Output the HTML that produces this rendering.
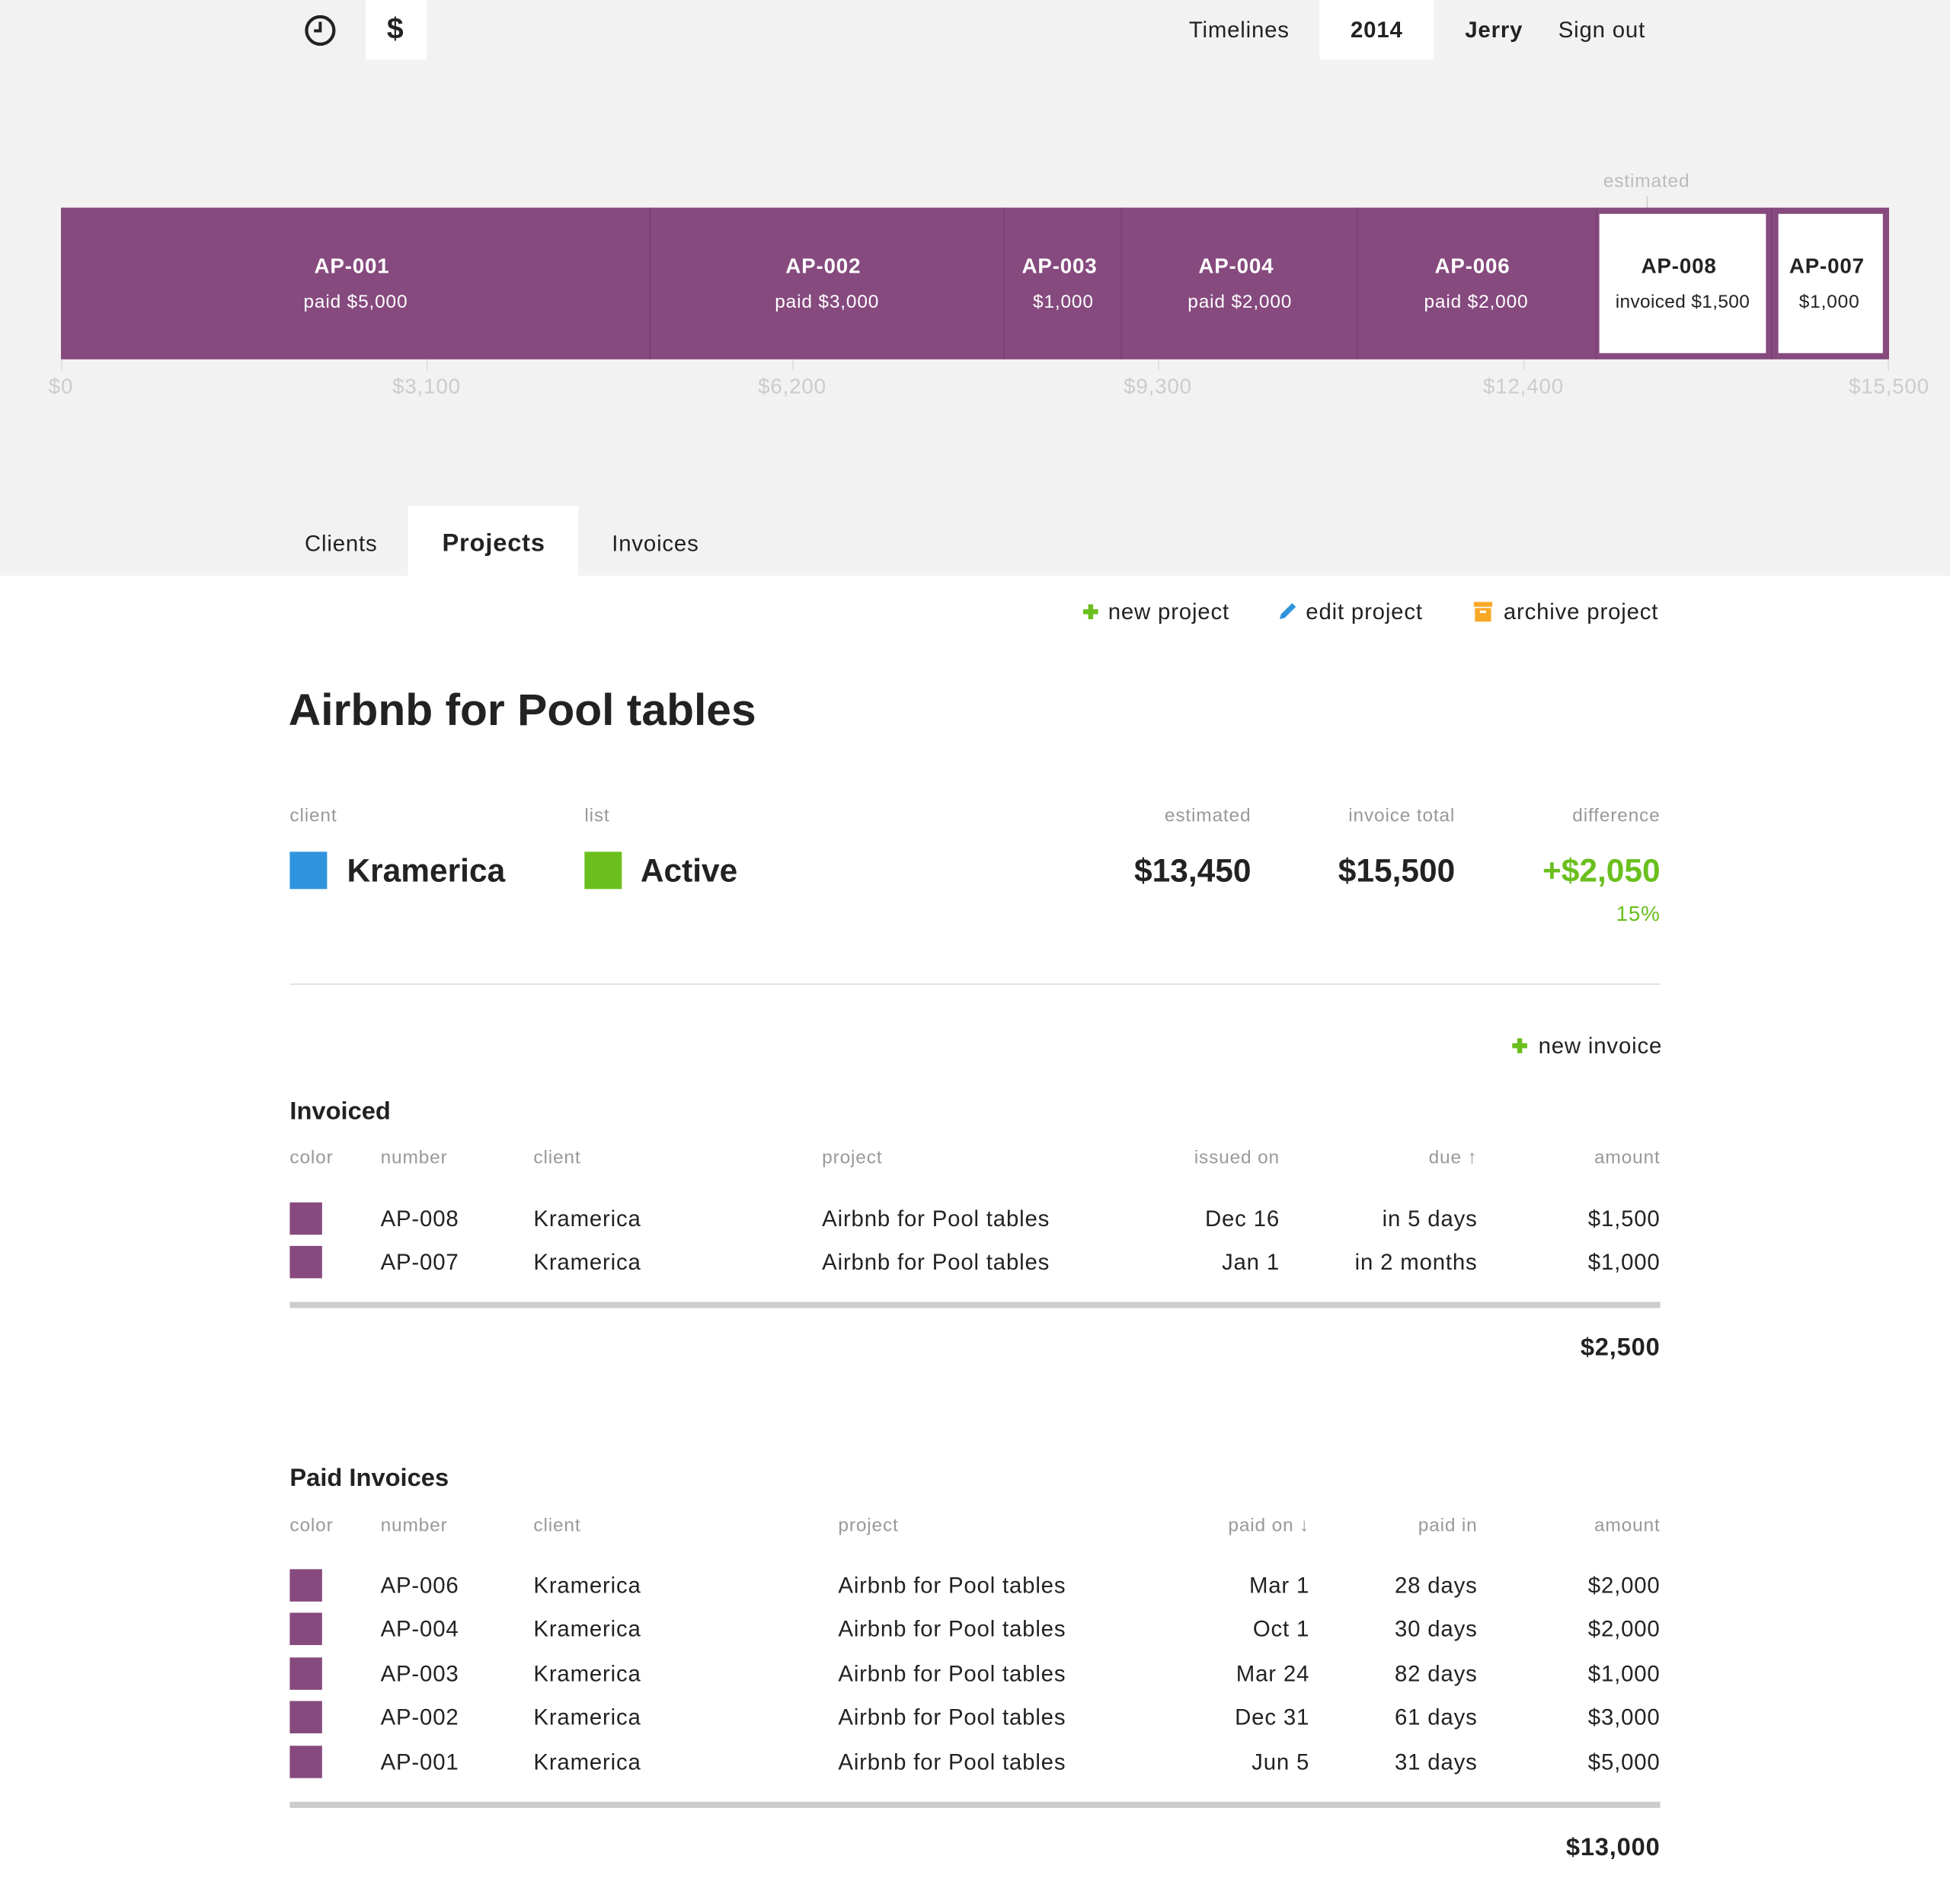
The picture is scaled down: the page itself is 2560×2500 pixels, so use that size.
<!DOCTYPE html>
<html><head><meta charset="utf-8">
<style>
html,body{margin:0;padding:0;width:2560px;height:2499px;overflow:hidden;background:#fff}
#s{position:absolute;left:0;top:0;width:1568px;height:1531px;transform:scale(1.63265);transform-origin:0 0;font-family:"Liberation Sans",sans-serif;color:#222;letter-spacing:0.5px}
.a{position:absolute}
.t{position:absolute;transform:translateY(-50%);line-height:1;white-space:nowrap}
.r{text-align:right}
.g{color:#999}
.b{font-weight:bold}
.c{transform:translate(-50%,-50%);text-align:center}
.sq{position:absolute;width:26px;height:26px;background:#864a7e}
</style></head><body><div id="s">
<div class="a" style="left:0;top:0;width:1568px;height:463px;background:#f2f2f2"></div>
<svg class="a" style="left:244px;top:11px" width="27" height="27" viewBox="0 0 27 27"><circle cx="13.5" cy="13.5" r="11" fill="none" stroke="#222" stroke-width="2.6"/><path d="M13.5 6.5V13.8H8.5" fill="none" stroke="#222" stroke-width="2.4"/></svg>
<div class="a" style="left:294px;top:0;width:49px;height:48px;background:#fff"></div>
<div class="t b c" style="left:318px;top:24px;font-size:24px">$</div>
<div class="t" style="left:956px;top:24px;font-size:18px">Timelines</div>
<div class="a" style="left:1061px;top:0;width:92px;height:48px;background:#fff"></div>
<div class="t b c" style="left:1107px;top:24px;font-size:18px">2014</div>
<div class="t b" style="left:1178px;top:24px;font-size:18px">Jerry</div>
<div class="t" style="left:1253px;top:24px;font-size:18px">Sign out</div>
<div class="t c" style="left:1324px;top:146px;font-size:15px;color:#bbb">estimated</div>
<div class="a" style="left:1324px;top:158px;width:1px;height:9px;background:#ccc"></div>
<div class="a" style="left:49px;top:167px;width:1470px;height:122px;background:#864a7e"></div>
<div class="a" style="left:522px;top:167px;width:1px;height:122px;background:#7a4073"></div>
<div class="a" style="left:807px;top:167px;width:1px;height:122px;background:#7a4073"></div>
<div class="a" style="left:901px;top:167px;width:1px;height:122px;background:#7a4073"></div>
<div class="a" style="left:1091px;top:167px;width:1px;height:122px;background:#7a4073"></div>
<div class="a" style="left:1283px;top:167px;width:1px;height:122px;background:#7a4073"></div>
<div class="a" style="left:1424px;top:167px;width:1px;height:122px;background:#7a4073"></div>
<div class="a" style="left:1286px;top:172px;width:134px;height:112px;background:#fff"></div>
<div class="a" style="left:1430px;top:172px;width:84px;height:112px;background:#fff"></div>
<div style="color:#fff">
<div class="t b c" style="left:283px;top:214px;font-size:17px">AP-001</div><div class="t c" style="left:286px;top:243px;font-size:15px">paid $5,000</div>
<div class="t b c" style="left:662px;top:214px;font-size:17px">AP-002</div><div class="t c" style="left:665px;top:243px;font-size:15px">paid $3,000</div>
<div class="t b c" style="left:852px;top:214px;font-size:17px">AP-003</div><div class="t c" style="left:855px;top:243px;font-size:15px">$1,000</div>
<div class="t b c" style="left:994px;top:214px;font-size:17px">AP-004</div><div class="t c" style="left:997px;top:243px;font-size:15px">paid $2,000</div>
<div class="t b c" style="left:1184px;top:214px;font-size:17px">AP-006</div><div class="t c" style="left:1187px;top:243px;font-size:15px">paid $2,000</div>
</div>
<div class="t b c" style="left:1350px;top:214px;font-size:17px">AP-008</div><div class="t c" style="left:1353px;top:243px;font-size:15px;letter-spacing:0.2px">invoiced $1,500</div>
<div class="t b c" style="left:1469px;top:214px;font-size:17px">AP-007</div><div class="t c" style="left:1471px;top:243px;font-size:15px">$1,000</div>
<div style="color:#ccc;font-size:17px">
<div class="a" style="left:49px;top:289px;width:1px;height:9px;background:#ddd"></div><div class="t c" style="left:49px;top:311px">$0</div>
<div class="a" style="left:343px;top:289px;width:1px;height:9px;background:#ddd"></div><div class="t c" style="left:343px;top:311px">$3,100</div>
<div class="a" style="left:637px;top:289px;width:1px;height:9px;background:#ddd"></div><div class="t c" style="left:637px;top:311px">$6,200</div>
<div class="a" style="left:931px;top:289px;width:1px;height:9px;background:#ddd"></div><div class="t c" style="left:931px;top:311px">$9,300</div>
<div class="a" style="left:1225px;top:289px;width:1px;height:9px;background:#ddd"></div><div class="t c" style="left:1225px;top:311px">$12,400</div>
<div class="a" style="left:1518px;top:289px;width:1px;height:9px;background:#ddd"></div><div class="t c" style="left:1519px;top:311px">$15,500</div>
</div>
<div class="t" style="left:245px;top:437px;font-size:18px">Clients</div>
<div class="a" style="left:328px;top:407px;width:137px;height:57px;background:#fff"></div>
<div class="t b c" style="left:397px;top:437px;font-size:20px">Projects</div>
<div class="t" style="left:492px;top:437px;font-size:18px">Invoices</div>
<svg class="a" style="left:870px;top:485px" width="14" height="14"><path d="M7 1V13M1 7H13" stroke="#6abf1e" stroke-width="4"/></svg>
<div class="t" style="left:891px;top:492px;font-size:18px">new project</div>
<svg class="a" style="left:1026px;top:483px" width="18" height="18"><path d="M3 15L4 11L13 2L16 5L7 14Z" fill="#2f94dd"/></svg>
<div class="t" style="left:1050px;top:492px;font-size:18px">edit project</div>
<svg class="a" style="left:1185px;top:484px" width="15" height="16"><rect x="0" y="0" width="15" height="4" fill="#f9a825"/><rect x="1" y="5" width="13" height="11" fill="#f9a825"/><rect x="5" y="7" width="5" height="2" fill="#fff"/></svg>
<div class="t" style="left:1209px;top:492px;font-size:18px">archive project</div>
<div class="t b" style="left:232px;top:571px;font-size:36px;letter-spacing:0">Airbnb for Pool tables</div>
<div class="t g" style="left:233px;top:656px;font-size:15px">client</div>
<div class="t g" style="left:470px;top:656px;font-size:15px">list</div>
<div class="t g r" style="right:562px;top:656px;font-size:15px">estimated</div>
<div class="t g r" style="right:398px;top:656px;font-size:15px">invoice total</div>
<div class="t g r" style="right:233px;top:656px;font-size:15px">difference</div>
<div class="a" style="left:233px;top:685px;width:30px;height:30px;background:#2f94dd"></div>
<div class="t b" style="left:279px;top:700px;font-size:26px;letter-spacing:0">Kramerica</div>
<div class="a" style="left:470px;top:685px;width:30px;height:30px;background:#6abf1e"></div>
<div class="t b" style="left:515px;top:700px;font-size:26px;letter-spacing:0">Active</div>
<div class="t b r" style="right:562px;top:700px;font-size:26px;letter-spacing:0">$13,450</div>
<div class="t b r" style="right:398px;top:700px;font-size:26px;letter-spacing:0">$15,500</div>
<div class="t b r" style="right:233px;top:700px;font-size:26px;color:#6abf1e;letter-spacing:0">+$2,050</div>
<div class="t r" style="right:233px;top:735px;font-size:17px;color:#6abf1e">15%</div>
<div class="a" style="left:233px;top:791px;width:1102px;height:1px;background:#ddd"></div>
<svg class="a" style="left:1215px;top:834px" width="14" height="14"><path d="M7 1V13M1 7H13" stroke="#6abf1e" stroke-width="4"/></svg>
<div class="t" style="left:1237px;top:841px;font-size:18px">new invoice</div>
<div class="t b" style="left:233px;top:894px;font-size:20px;letter-spacing:0">Invoiced</div>
<div style="font-size:15px" class="g">
<div class="t" style="left:233px;top:931px">color</div>
<div class="t" style="left:306px;top:931px">number</div>
<div class="t" style="left:429px;top:931px">client</div>
<div class="t" style="left:661px;top:931px">project</div>
<div class="t r" style="right:539px;top:931px">issued on</div>
<div class="t r" style="right:380px;top:931px">due ↑</div>
<div class="t r" style="right:233px;top:931px">amount</div>
</div>
<div style="font-size:18px">
<div class="sq" style="left:233px;top:967px"></div>
<div class="t" style="left:306px;top:980px">AP-008</div><div class="t" style="left:429px;top:980px">Kramerica</div><div class="t" style="left:661px;top:980px">Airbnb for Pool tables</div><div class="t r" style="right:539px;top:980px">Dec 16</div><div class="t r" style="right:380px;top:980px">in 5 days</div><div class="t r" style="right:233px;top:980px">$1,500</div>
<div class="sq" style="left:233px;top:1002px"></div>
<div class="t" style="left:306px;top:1015px">AP-007</div><div class="t" style="left:429px;top:1015px">Kramerica</div><div class="t" style="left:661px;top:1015px">Airbnb for Pool tables</div><div class="t r" style="right:539px;top:1015px">Jan 1</div><div class="t r" style="right:380px;top:1015px">in 2 months</div><div class="t r" style="right:233px;top:1015px">$1,000</div>
</div>
<div class="a" style="left:233px;top:1047px;width:1102px;height:5px;background:#ccc"></div>
<div class="t b r" style="right:233px;top:1084px;font-size:20px">$2,500</div>
<div class="t b" style="left:233px;top:1189px;font-size:20px;letter-spacing:0">Paid Invoices</div>
<div style="font-size:15px" class="g">
<div class="t" style="left:233px;top:1227px">color</div>
<div class="t" style="left:306px;top:1227px">number</div>
<div class="t" style="left:429px;top:1227px">client</div>
<div class="t" style="left:674px;top:1227px">project</div>
<div class="t r" style="right:515px;top:1227px">paid on ↓</div>
<div class="t r" style="right:380px;top:1227px">paid in</div>
<div class="t r" style="right:233px;top:1227px">amount</div>
</div>
<div style="font-size:18px">
<div class="sq" style="left:233px;top:1262px"></div>
<div class="t" style="left:306px;top:1275px">AP-006</div><div class="t" style="left:429px;top:1275px">Kramerica</div><div class="t" style="left:674px;top:1275px">Airbnb for Pool tables</div><div class="t r" style="right:515px;top:1275px">Mar 1</div><div class="t r" style="right:380px;top:1275px">28 days</div><div class="t r" style="right:233px;top:1275px">$2,000</div>
<div class="sq" style="left:233px;top:1297px"></div>
<div class="t" style="left:306px;top:1310px">AP-004</div><div class="t" style="left:429px;top:1310px">Kramerica</div><div class="t" style="left:674px;top:1310px">Airbnb for Pool tables</div><div class="t r" style="right:515px;top:1310px">Oct 1</div><div class="t r" style="right:380px;top:1310px">30 days</div><div class="t r" style="right:233px;top:1310px">$2,000</div>
<div class="sq" style="left:233px;top:1333px"></div>
<div class="t" style="left:306px;top:1346px">AP-003</div><div class="t" style="left:429px;top:1346px">Kramerica</div><div class="t" style="left:674px;top:1346px">Airbnb for Pool tables</div><div class="t r" style="right:515px;top:1346px">Mar 24</div><div class="t r" style="right:380px;top:1346px">82 days</div><div class="t r" style="right:233px;top:1346px">$1,000</div>
<div class="sq" style="left:233px;top:1368px"></div>
<div class="t" style="left:306px;top:1381px">AP-002</div><div class="t" style="left:429px;top:1381px">Kramerica</div><div class="t" style="left:674px;top:1381px">Airbnb for Pool tables</div><div class="t r" style="right:515px;top:1381px">Dec 31</div><div class="t r" style="right:380px;top:1381px">61 days</div><div class="t r" style="right:233px;top:1381px">$3,000</div>
<div class="sq" style="left:233px;top:1404px"></div>
<div class="t" style="left:306px;top:1417px">AP-001</div><div class="t" style="left:429px;top:1417px">Kramerica</div><div class="t" style="left:674px;top:1417px">Airbnb for Pool tables</div><div class="t r" style="right:515px;top:1417px">Jun 5</div><div class="t r" style="right:380px;top:1417px">31 days</div><div class="t r" style="right:233px;top:1417px">$5,000</div>
</div>
<div class="a" style="left:233px;top:1449px;width:1102px;height:5px;background:#ccc"></div>
<div class="t b r" style="right:233px;top:1486px;font-size:20px">$13,000</div>
</div></body></html>
